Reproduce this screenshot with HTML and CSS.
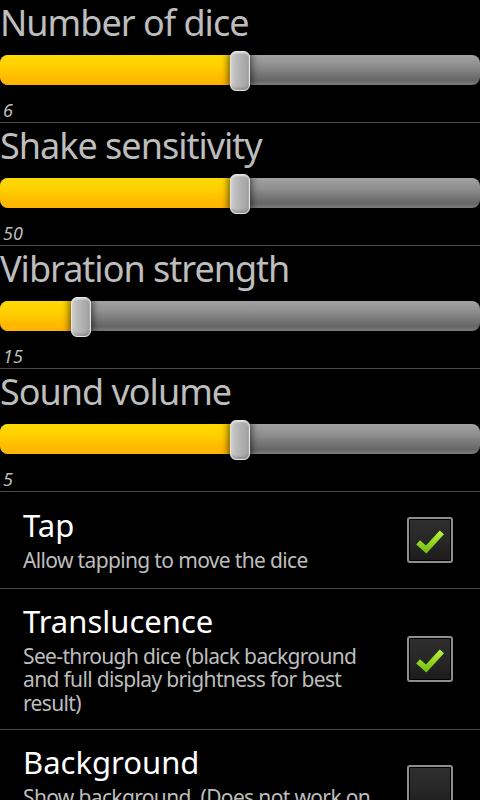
FILE: index.html
```html
<!DOCTYPE html>
<html>
<head>
<meta charset="utf-8">
<link rel="stylesheet" href="styles.css">
</head>
<body>
<div class="prefs">
  <section class="slider-pref">
    <div class="slider-title">Number of dice</div>
    <div class="seek" style="--p:50%"><div class="fill"></div><div class="thumb"></div></div>
    <div class="slider-value">6</div>
  </section>
  <div class="sep"></div>
  <section class="slider-pref">
    <div class="slider-title">Shake sensitivity</div>
    <div class="seek" style="--p:50%"><div class="fill"></div><div class="thumb"></div></div>
    <div class="slider-value">50</div>
  </section>
  <div class="sep"></div>
  <section class="slider-pref">
    <div class="slider-title">Vibration strength</div>
    <div class="seek" style="--p:16.8%"><div class="fill"></div><div class="thumb"></div></div>
    <div class="slider-value">15</div>
  </section>
  <div class="sep"></div>
  <section class="slider-pref">
    <div class="slider-title">Sound volume</div>
    <div class="seek" style="--p:50%"><div class="fill"></div><div class="thumb"></div></div>
    <div class="slider-value">5</div>
  </section>
  <div class="sep"></div>
  <section class="check-pref">
    <div class="check-text">
      <div class="check-title">Tap</div>
      <div class="check-summary">Allow tapping to move the dice</div>
    </div>
    <div class="checkbox checked">
      <svg viewBox="0 0 42 42" width="42" height="42"><defs><linearGradient id="g1" x1="0" y1="0" x2="0" y2="1"><stop offset="0" stop-color="#b4ef3a"/><stop offset="1" stop-color="#7cc414"/></linearGradient></defs><path d="M8.5 23.5 L17 31 L33.5 13" fill="none" stroke="url(#g1)" stroke-width="6" stroke-linejoin="miter" stroke-linecap="butt"/></svg>
    </div>
  </section>
  <div class="sep"></div>
  <section class="check-pref">
    <div class="check-text">
      <div class="check-title">Translucence</div>
      <div class="check-summary">See-through dice (black background and full display brightness for best result)</div>
    </div>
    <div class="checkbox checked">
      <svg viewBox="0 0 42 42" width="42" height="42"><defs><linearGradient id="g2" x1="0" y1="0" x2="0" y2="1"><stop offset="0" stop-color="#b4ef3a"/><stop offset="1" stop-color="#7cc414"/></linearGradient></defs><path d="M8.5 23.5 L17 31 L33.5 13" fill="none" stroke="url(#g2)" stroke-width="6" stroke-linejoin="miter" stroke-linecap="butt"/></svg>
    </div>
  </section>
  <div class="sep"></div>
  <section class="check-pref">
    <div class="check-text">
      <div class="check-title">Background</div>
      <div class="check-summary">Show background. (Does not work on all devices)</div>
    </div>
    <div class="checkbox"></div>
  </section>
</div>
</body>
</html>
```
FILE: styles.css
```css
html, body {
  margin: 0;
  padding: 0;
  background: #000;
}
body {
  font-family: "Noto Sans", "Open Sans", sans-serif;
  width: 480px;
  height: 800px;
  overflow: hidden;
}
.prefs {
  display: flex;
  flex-direction: column;
}
.sep {
  height: 1px;
  background: #4a4a4a;
}
.slider-pref {
  height: 122px;
  display: flex;
  flex-direction: column;
}
.slider-title {
  font-size: 36px;
  line-height: 44px;
  height: 44px;
  margin-top: 1px;
  letter-spacing: -1px;
  color: #bdbdbd;
  white-space: nowrap;
}
.seek {
  position: relative;
  margin-top: 10px;
  height: 30px;
  border-radius: 8px;
  background: linear-gradient(#a2a2a2 0%, #8f8f8f 35%, #717171 70%, #666 85%, #7c7c7c 100%);
}
.fill {
  height: 100%;
  width: var(--p);
  border-radius: 8px 0 0 8px;
  background: linear-gradient(#ffd900 0%, #ffcf00 40%, #ffbb00 75%, #ffb300 100%);
}
.thumb {
  position: absolute;
  top: -4px;
  left: calc(var(--p) - 10px);
  width: 20px;
  height: 40px;
  box-sizing: border-box;
  border-radius: 6px;
  border: 1px solid #e6e6e6;
  background: linear-gradient(to right, #d4d4d4 0%, #bdbdbd 25%, #ababab 70%, #a0a0a0 100%);
  box-shadow: 0 0 7px 2px rgba(0,0,0,0.55), inset 0 1px 2px rgba(255,255,255,0.7), inset 0 -2px 3px rgba(0,0,0,0.2);
}
.slider-value {
  margin-top: 14px;
  padding-left: 3px;
  font-size: 18px;
  line-height: 22px;
  font-style: italic;
  color: #bdbdbd;
}
.check-pref {
  min-height: 96px;
  display: flex;
  align-items: center;
  padding: 0 27px 0 23px;
}
.check-text {
  flex: 1;
  padding: 14px 0 14px;
  margin-right: 24px;
}
.check-title {
  font-size: 31px;
  line-height: 36px;
  color: #fff;
}
.check-summary {
  margin-top: 6px;
  font-size: 21px;
  line-height: 23.3px;
  letter-spacing: -0.65px;
  color: #bdbdbd;
}
.checkbox {
  width: 46px;
  height: 46px;
  box-sizing: border-box;
  border: 2px solid #8e8e8e;
  border-radius: 3px;
  padding: 1px;
  background: #000;
  flex: none;
  display: flex;
  align-items: center;
  justify-content: center;
  position: relative;
}
.checkbox::before {
  content: "";
  position: absolute;
  inset: 1px;
  background: linear-gradient(#2e2e2e, #262626 60%, #1c1c1c);
}
.checkbox svg {
  position: relative;
  display: block;
}
```
